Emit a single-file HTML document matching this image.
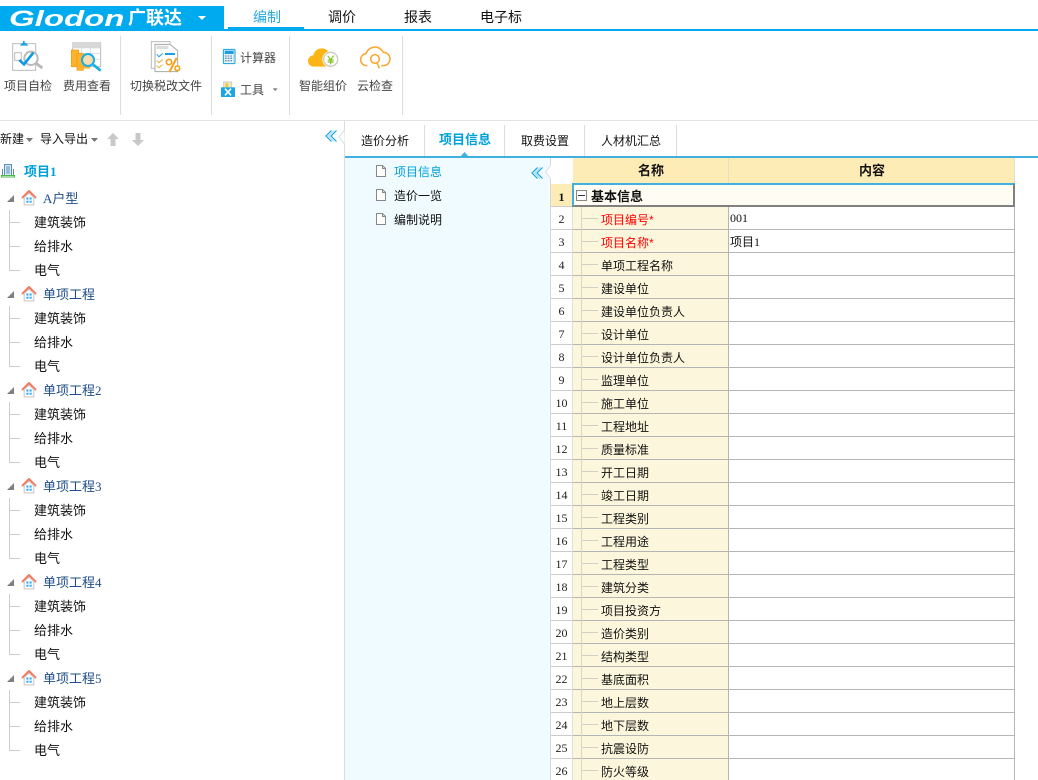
<!DOCTYPE html>
<html><head><meta charset="utf-8">
<style>
html,body{margin:0;padding:0;background:#fff}
#p{position:relative;width:1038px;height:780px;overflow:hidden;background:#fff;font-family:"WenQuanYi Zen Hei","Liberation Sans","Noto Sans CJK SC",sans-serif;font-size:13px;color:#111}
#p div,#p>svg{position:absolute}
.t{white-space:nowrap;line-height:16px}
.tb{color:#444;font-size:12px}
.nav{font-size:13px;color:#1f4e86}
.s{font-family:"Liberation Serif",serif}
.top{font-size:14px;top:9px}
.r{left:551px;width:464px;height:23px}
.n{left:0;width:21px;height:22px;background:#fff;border-bottom:1px solid #ccc;border-right:1px solid #e0e0d0;text-align:center;font:12px/24px "Liberation Serif",serif;color:#222}
.g{left:22px;width:155px;height:22px;background:#fcf7dc;border-bottom:1px solid #b5b5b5;border-right:1px solid #b5b5b5}
.c{left:178px;width:285px;height:22px;background:#fff;border-bottom:1px solid #b5b5b5;border-right:1px solid #b5b5b5;font-size:12px;line-height:24px;text-indent:1px}
.v{left:8px;top:0;width:1px;height:23px;background:#d8d8c8}
.h{left:9px;top:11px;width:16px;height:1px;background:#d0d0c4}
.l{left:28px;top:5px;white-space:nowrap;line-height:16px;font-size:12px;color:#111}
.red{color:#f00}
.m{font:12px/23px "Liberation Serif",serif}
</style></head><body><div id="p">
<svg width="0" height="0" style="position:absolute"><defs>
<g id="house"><path d="M1 7.500 7.500 1 14 7.500" fill="none" stroke="#f47a5c" stroke-width="2"/><path d="M3 7V14H12V7L7.500 3Z" fill="#fff" stroke="#c8c8c8"/><rect x="5" y="7" width="2" height="2" fill="#38b0f0"/><rect x="8" y="7" width="2" height="2" fill="#38b0f0"/><rect x="5" y="10" width="2" height="2" fill="#38b0f0"/><rect x="8" y="10" width="2" height="2" fill="#38b0f0"/></g>
<g id="doc"><path d="M.5.5H6.500L9.500 3.500V11.500H.5Z" fill="#fff" stroke="#888"/><path d="M6.500.5V3.500H9.500" fill="none" stroke="#888"/></g>
<g id="chev"><path d="M6.500.5 1 6 6.500 11.500M11.500.5 6 6 11.500 11.500" fill="none" stroke="#12a3de" stroke-width="1.200"/><path d="M9 .5 3.500 6 9 11.500" fill="none" stroke="#9bd8f0" stroke-width="1"/></g>
</defs></svg>

<!-- top bar -->
<div style="left:0;top:6px;width:224px;height:25px;background:#00aaee"></div>
<div style="left:224px;top:29px;width:814px;height:2px;background:#00aaee"></div>
<div style="left:228px;top:27px;width:76px;height:2px;background:#00aaee"></div>
<div class="t" style="left:9px;top:6px;color:#fff;font:italic bold 22px/25px 'Liberation Sans',sans-serif;transform-origin:0 50%;transform:scaleX(1.5)">Glodon</div>
<div class="t" style="left:128px;top:9px;color:#fff;font-size:18px;font-weight:bold;line-height:18px">广联达</div>
<svg style="left:197px;top:15px" width="10" height="6"><path d="M1 1H9L5 5Z" fill="#fff"/></svg>
<div class="t top" style="left:253px;color:#28a8e0">编制</div>
<div class="t top" style="left:328px">调价</div>
<div class="t top" style="left:404px">报表</div>
<div class="t top" style="left:480px">电子标</div>

<!-- toolbar -->
<div style="left:120px;top:36px;width:1px;height:79px;background:#ddd"></div>
<div style="left:211px;top:36px;width:1px;height:79px;background:#ddd"></div>
<div style="left:289px;top:36px;width:1px;height:79px;background:#ddd"></div>
<div style="left:402px;top:36px;width:1px;height:79px;background:#ddd"></div>
<div style="left:0;top:120px;width:1038px;height:1px;background:#e2e2e2"></div>

<svg style="left:0;top:30px" width="120" height="50" viewBox="0 0 360 150">
<rect x="38" y="41" width="69" height="80" fill="#fff" stroke="#bbb" stroke-width="3"/>
<path d="M60 47q4-8 9-8v-6h5v6q6 0 11 8z" fill="#18a6e8"/>
<rect x="44" y="68" width="20" height="23" fill="none" stroke="#bbb" stroke-width="3"/>
<circle cx="93" cy="85" r="20" fill="#fff" stroke="#bbb" stroke-width="6"/>
<path d="M108 100 127 114" stroke="#bbb" stroke-width="9"/>
<path d="M58 90 72 103 100 68" fill="none" stroke="#0a9be4" stroke-width="8"/>
<rect x="218" y="38" width="84" height="72" fill="#fff" stroke="#bbb" stroke-width="3"/>
<rect x="217" y="37" width="85" height="18" fill="#d8d8d8"/>
<path d="M217 70H302M217 88H302M245 55V110M272 55V110" stroke="#ddd" stroke-width="3"/>
<rect x="214" y="60" width="22" height="50" fill="#fdb32b" stroke="#f09a10" stroke-width="2"/>
<rect x="231" y="70" width="19" height="51" fill="#fdb32b" stroke="#f09a10" stroke-width="2"/>
<rect x="250" y="90" width="20" height="26" fill="#fdb32b"/>
<circle cx="264" cy="90" r="18" fill="#fbdcae" stroke="#18aee8" stroke-width="6"/>
<path d="M280 104 302 122" stroke="#18aee8" stroke-width="8"/>
</svg>
<svg style="left:120px;top:30px" width="160" height="75" viewBox="0 0 480 225">
<path d="M94 35H150V115H94Z" fill="#fff" stroke="#bbb" stroke-width="3"/>
<path d="M105 43H150L173 62V125H105Z" fill="#fff" stroke="#aaa" stroke-width="3"/>
<rect x="110" y="47" width="35" height="10" fill="#ddd"/>
<path d="M110 73 117 80 128 70" fill="none" stroke="#18a0e0" stroke-width="3"/>
<rect x="135" y="69" width="30" height="6" fill="#18a0e0"/>
<path d="M110 92 117 98 128 88M110 107 117 113 128 104" fill="none" stroke="#e2b53e" stroke-width="3"/>
<circle cx="147" cy="96" r="8" fill="#fff" stroke="#f5a31c" stroke-width="5"/>
<path d="M170 84 148 126" stroke="#f5a31c" stroke-width="6"/>
<circle cx="172" cy="115" r="7" fill="#fff" stroke="#f5a31c" stroke-width="5"/>
<rect x="310" y="58" width="35" height="43" rx="3" fill="#e4f3fb" stroke="#1c9fdc" stroke-width="3"/>
<rect x="314" y="62" width="27" height="10" fill="#1c9fdc"/>
<path d="M315 78H340M315 85H340M315 92H340" stroke="#6a95b8" stroke-width="4" stroke-dasharray="5 3"/>
<rect x="311" y="156" width="24" height="20" fill="#f4e9c4" stroke="#ccc" stroke-width="3"/>
<rect x="316" y="160" width="9" height="12" fill="#f0c838"/>
<rect x="303" y="172" width="42" height="29" fill="#19a6e2"/>
<path d="M315 176 333 196M333 176 315 196" stroke="#fff" stroke-width="5"/>
<path d="M458 175H473L465.500 183Z" fill="#777"/>
</svg>
<svg style="left:290px;top:35px" width="110" height="40" viewBox="0 0 330 120">
<path d="M72 95a17 17 0 0 1-2-34 26 26 0 0 1 45-12q8 8 5 46z" fill="#fdb515"/>
<circle cx="122" cy="73" r="25" fill="#fff"/>
<circle cx="122" cy="73" r="21" fill="#fff" stroke="#cfcabc" stroke-width="4"/>
<path d="M113 62 122 74 131 62M122 74V88M113 75H131M113 81H131" fill="none" stroke="#7dc21e" stroke-width="3.500"/>
<path d="M232 92a18 18 0 0 1-4-36 28 28 0 0 1 52-4 20 20 0 0 1 0 40h-6" fill="none" stroke="#fba62a" stroke-width="4.500"/>
<circle cx="255" cy="72" r="13" fill="none" stroke="#fba62a" stroke-width="4.500"/>
<path d="M262 85 268 100" stroke="#fba62a" stroke-width="4.500"/>
</svg>

<div class="t tb" style="left:4px;top:78px">项目自检</div>
<div class="t tb" style="left:63px;top:78px">费用查看</div>
<div class="t tb" style="left:130px;top:78px">切换税改文件</div>
<div class="t tb" style="left:240px;top:50px">计算器</div>
<div class="t tb" style="left:240px;top:82px">工具</div>
<div class="t tb" style="left:299px;top:78px">智能组价</div>
<div class="t tb" style="left:357px;top:78px">云检查</div>

<!-- left pane -->
<div style="left:344px;top:121px;width:1px;height:659px;background:#ddd"></div>
<div class="t" style="left:0;top:131px;font-size:12px">新建</div>
<svg style="left:26px;top:138px" width="7" height="4"><path d="M0 0H7L3.500 4Z" fill="#777"/></svg>
<div class="t" style="left:40px;top:131px;font-size:12px">导入导出</div>
<svg style="left:91px;top:138px" width="7" height="4"><path d="M0 0H7L3.500 4Z" fill="#777"/></svg>
<svg style="left:107px;top:133px" width="12" height="13"><path d="M6 0 12 6H8.500V13H3.500V6H0Z" fill="#c8c8c8"/></svg>
<svg style="left:132px;top:133px" width="12" height="13"><path d="M6 13 12 7H8.500V0H3.500V7H0Z" fill="#c8c8c8"/></svg>
<svg style="left:325px;top:130px" width="13" height="13"><use href="#chev"/></svg>
<svg style="left:338px;top:130px" width="7" height="14"><path d="M6.500 0 1 7 6.500 14" fill="#fff" stroke="#ddd"/></svg>

<svg style="left:1px;top:164px" width="14" height="14"><rect x="3.500" y=".5" width="7" height="11" fill="#dbe9f4" stroke="#5a8fb8"/><path d="M1.500 5V11.500M12.500 5V11.500M5 3h4M5 5h4M5 7h4M5 9h4" stroke="#5a8fb8"/><rect x=".5" y="11.500" width="13" height="1.500" fill="#fff" stroke="#4cb848"/></svg>
<div class="t" style="left:24px;top:164px;color:#00a0dc;font-weight:bold">项目<span class="s">1</span></div>

<!-- groups -->
<svg style="left:7px;top:195px" width="7" height="7"><path d="M7 0V7H0Z" fill="#808080"/></svg><svg style="left:21px;top:190px" width="16" height="16" viewBox="0 0 15 15"><use href="#house"/></svg><div class="t nav" style="left:43px;top:191px"><span class="s">A</span>户型</div>
<svg style="left:7px;top:291px" width="7" height="7"><path d="M7 0V7H0Z" fill="#808080"/></svg><svg style="left:21px;top:286px" width="16" height="16" viewBox="0 0 15 15"><use href="#house"/></svg><div class="t nav" style="left:43px;top:287px">单项工程</div>
<svg style="left:7px;top:387px" width="7" height="7"><path d="M7 0V7H0Z" fill="#808080"/></svg><svg style="left:21px;top:382px" width="16" height="16" viewBox="0 0 15 15"><use href="#house"/></svg><div class="t nav" style="left:43px;top:383px">单项工程<span class="s">2</span></div>
<svg style="left:7px;top:483px" width="7" height="7"><path d="M7 0V7H0Z" fill="#808080"/></svg><svg style="left:21px;top:478px" width="16" height="16" viewBox="0 0 15 15"><use href="#house"/></svg><div class="t nav" style="left:43px;top:479px">单项工程<span class="s">3</span></div>
<svg style="left:7px;top:579px" width="7" height="7"><path d="M7 0V7H0Z" fill="#808080"/></svg><svg style="left:21px;top:574px" width="16" height="16" viewBox="0 0 15 15"><use href="#house"/></svg><div class="t nav" style="left:43px;top:575px">单项工程<span class="s">4</span></div>
<svg style="left:7px;top:675px" width="7" height="7"><path d="M7 0V7H0Z" fill="#808080"/></svg><svg style="left:21px;top:670px" width="16" height="16" viewBox="0 0 15 15"><use href="#house"/></svg><div class="t nav" style="left:43px;top:671px">单项工程<span class="s">5</span></div>

<svg style="left:9px;top:210px" width="12" height="550" fill="none" stroke="#ccc"><path d="M.5 0V60.500H11M.5 12.500H11M.5 36.500H11M.5 96V156.500H11M.5 108.500H11M.5 132.500H11M.5 192V252.500H11M.5 204.500H11M.5 228.500H11M.5 288V348.500H11M.5 300.500H11M.5 324.500H11M.5 384V444.500H11M.5 396.500H11M.5 420.500H11M.5 480V540.500H11M.5 492.500H11M.5 516.500H11"/></svg>

<div class="t" style="left:34px;top:215px">建筑装饰</div><div class="t" style="left:34px;top:239px">给排水</div><div class="t" style="left:34px;top:263px">电气</div>
<div class="t" style="left:34px;top:311px">建筑装饰</div><div class="t" style="left:34px;top:335px">给排水</div><div class="t" style="left:34px;top:359px">电气</div>
<div class="t" style="left:34px;top:407px">建筑装饰</div><div class="t" style="left:34px;top:431px">给排水</div><div class="t" style="left:34px;top:455px">电气</div>
<div class="t" style="left:34px;top:503px">建筑装饰</div><div class="t" style="left:34px;top:527px">给排水</div><div class="t" style="left:34px;top:551px">电气</div>
<div class="t" style="left:34px;top:599px">建筑装饰</div><div class="t" style="left:34px;top:623px">给排水</div><div class="t" style="left:34px;top:647px">电气</div>
<div class="t" style="left:34px;top:695px">建筑装饰</div><div class="t" style="left:34px;top:719px">给排水</div><div class="t" style="left:34px;top:743px">电气</div>

<!-- tabs -->
<div style="left:345px;top:156px;width:693px;height:2px;background:#3fb0df"></div>
<div style="left:424px;top:125px;width:1px;height:31px;background:#ddd"></div>
<div style="left:504px;top:125px;width:1px;height:31px;background:#ddd"></div>
<div style="left:584px;top:125px;width:1px;height:31px;background:#ddd"></div>
<div style="left:676px;top:125px;width:1px;height:31px;background:#ddd"></div>
<svg style="left:460px;top:152px" width="9" height="5"><path d="M4.500 0 9 5H0Z" fill="#3fb0df"/></svg>
<div class="t" style="left:361px;top:133px;font-size:12px">造价分析</div>
<div class="t" style="left:439px;top:132px;color:#00a0dc;font-weight:bold">项目信息</div>
<div class="t" style="left:521px;top:133px;font-size:12px">取费设置</div>
<div class="t" style="left:601px;top:133px;font-size:12px">人材机汇总</div>

<!-- middle pane -->
<div style="left:345px;top:158px;width:205px;height:622px;background:#effbfe"></div>
<div style="left:550px;top:158px;width:1px;height:622px;background:#d8d8d8"></div>
<svg style="left:531px;top:167px" width="13" height="13"><use href="#chev"/></svg>
<svg style="left:545px;top:165px" width="6" height="14"><path d="M6 0 .5 7 6 14" fill="#fff" stroke="#ddd"/></svg>
<svg style="left:376px;top:165px" width="10" height="12"><use href="#doc"/></svg><div class="t" style="left:394px;top:164px;font-size:12px;color:#00a0dc">项目信息</div>
<svg style="left:376px;top:189px" width="10" height="12"><use href="#doc"/></svg><div class="t" style="left:394px;top:188px;font-size:12px">造价一览</div>
<svg style="left:376px;top:213px" width="10" height="12"><use href="#doc"/></svg><div class="t" style="left:394px;top:212px;font-size:12px">编制说明</div>

<!-- grid header -->
<div style="left:573px;top:158px;width:155px;height:25px;background:#feecb7"></div>
<div style="left:729px;top:158px;width:285px;height:25px;background:#feecb7"></div>
<div style="left:728px;top:158px;width:1px;height:25px;background:#e6dfc4"></div>
<div style="left:1014px;top:158px;width:1px;height:25px;background:#ddd"></div>
<div class="t" style="left:638px;top:163px;font-weight:bold">名称</div>
<div class="t" style="left:859px;top:163px;font-weight:bold">内容</div>

<!-- row 1 -->
<div style="left:551px;top:184px;width:21px;height:22px;background:#feecb7;border-bottom:1px solid #ccc"></div>
<div class="t s" style="left:551px;top:189px;width:21px;text-align:center;font-size:12px;font-weight:bold">1</div>
<div style="left:572px;top:183px;width:443px;height:24px;box-sizing:border-box;background:#fffdf3;border-top:2px solid #3fb0df;border-left:2px solid #3fb0df;border-right:2px solid #808080;border-bottom:2px solid #808080"></div>
<div style="left:576px;top:190px;width:9px;height:9px;border:1px solid #888;background:#fff"></div>
<div style="left:578px;top:195px;width:7px;height:1px;background:#333"></div>
<div class="t" style="left:591px;top:189px;font-weight:bold">基本信息</div>

<!-- rows -->
<div class="r" style="top:207px"><div class="n">2</div><div class="g"><div class="v"></div><div class="h"></div><div class="l red">项目编号*</div></div><div class="c m">001</div></div>
<div class="r" style="top:230px"><div class="n">3</div><div class="g"><div class="v"></div><div class="h"></div><div class="l red">项目名称*</div></div><div class="c">项目<span class="s">1</span></div></div>
<div class="r" style="top:253px"><div class="n">4</div><div class="g"><div class="v"></div><div class="h"></div><div class="l">单项工程名称</div></div><div class="c"></div></div>
<div class="r" style="top:276px"><div class="n">5</div><div class="g"><div class="v"></div><div class="h"></div><div class="l">建设单位</div></div><div class="c"></div></div>
<div class="r" style="top:299px"><div class="n">6</div><div class="g"><div class="v"></div><div class="h"></div><div class="l">建设单位负责人</div></div><div class="c"></div></div>
<div class="r" style="top:322px"><div class="n">7</div><div class="g"><div class="v"></div><div class="h"></div><div class="l">设计单位</div></div><div class="c"></div></div>
<div class="r" style="top:345px"><div class="n">8</div><div class="g"><div class="v"></div><div class="h"></div><div class="l">设计单位负责人</div></div><div class="c"></div></div>
<div class="r" style="top:368px"><div class="n">9</div><div class="g"><div class="v"></div><div class="h"></div><div class="l">监理单位</div></div><div class="c"></div></div>
<div class="r" style="top:391px"><div class="n">10</div><div class="g"><div class="v"></div><div class="h"></div><div class="l">施工单位</div></div><div class="c"></div></div>
<div class="r" style="top:414px"><div class="n">11</div><div class="g"><div class="v"></div><div class="h"></div><div class="l">工程地址</div></div><div class="c"></div></div>
<div class="r" style="top:437px"><div class="n">12</div><div class="g"><div class="v"></div><div class="h"></div><div class="l">质量标准</div></div><div class="c"></div></div>
<div class="r" style="top:460px"><div class="n">13</div><div class="g"><div class="v"></div><div class="h"></div><div class="l">开工日期</div></div><div class="c"></div></div>
<div class="r" style="top:483px"><div class="n">14</div><div class="g"><div class="v"></div><div class="h"></div><div class="l">竣工日期</div></div><div class="c"></div></div>
<div class="r" style="top:506px"><div class="n">15</div><div class="g"><div class="v"></div><div class="h"></div><div class="l">工程类别</div></div><div class="c"></div></div>
<div class="r" style="top:529px"><div class="n">16</div><div class="g"><div class="v"></div><div class="h"></div><div class="l">工程用途</div></div><div class="c"></div></div>
<div class="r" style="top:552px"><div class="n">17</div><div class="g"><div class="v"></div><div class="h"></div><div class="l">工程类型</div></div><div class="c"></div></div>
<div class="r" style="top:575px"><div class="n">18</div><div class="g"><div class="v"></div><div class="h"></div><div class="l">建筑分类</div></div><div class="c"></div></div>
<div class="r" style="top:598px"><div class="n">19</div><div class="g"><div class="v"></div><div class="h"></div><div class="l">项目投资方</div></div><div class="c"></div></div>
<div class="r" style="top:621px"><div class="n">20</div><div class="g"><div class="v"></div><div class="h"></div><div class="l">造价类别</div></div><div class="c"></div></div>
<div class="r" style="top:644px"><div class="n">21</div><div class="g"><div class="v"></div><div class="h"></div><div class="l">结构类型</div></div><div class="c"></div></div>
<div class="r" style="top:667px"><div class="n">22</div><div class="g"><div class="v"></div><div class="h"></div><div class="l">基底面积</div></div><div class="c"></div></div>
<div class="r" style="top:690px"><div class="n">23</div><div class="g"><div class="v"></div><div class="h"></div><div class="l">地上层数</div></div><div class="c"></div></div>
<div class="r" style="top:713px"><div class="n">24</div><div class="g"><div class="v"></div><div class="h"></div><div class="l">地下层数</div></div><div class="c"></div></div>
<div class="r" style="top:736px"><div class="n">25</div><div class="g"><div class="v"></div><div class="h"></div><div class="l">抗震设防</div></div><div class="c"></div></div>
<div class="r" style="top:759px"><div class="n">26</div><div class="g"><div class="v"></div><div class="h"></div><div class="l">防火等级</div></div><div class="c"></div></div>
</div></body></html>
